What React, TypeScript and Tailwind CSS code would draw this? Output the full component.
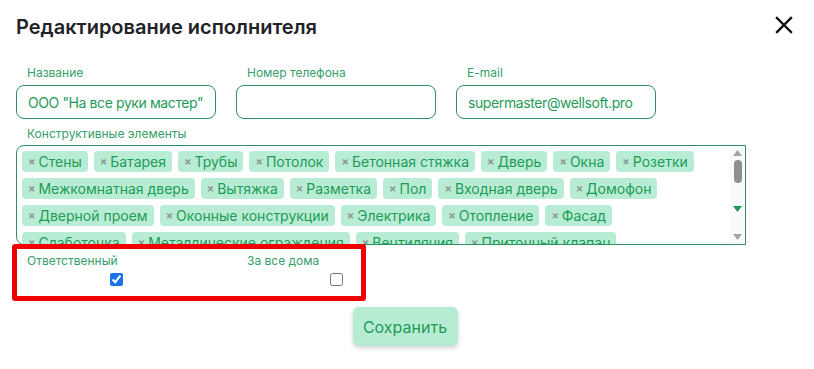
import { useState } from "react";

const TAGS = [
  "Стены",
  "Батарея",
  "Трубы",
  "Потолок",
  "Бетонная стяжка",
  "Дверь",
  "Окна",
  "Розетки",
  "Межкомнатная дверь",
  "Вытяжка",
  "Разметка",
  "Пол",
  "Входная дверь",
  "Домофон",
  "Дверной проем",
  "Оконные конструкции",
  "Электрика",
  "Отопление",
  "Фасад",
  "Слаботочка",
  "Металлические ограждения",
  "Вентиляция",
  "Приточный клапан",
];

function Field({ label, value }: { label: string; value: string }) {
  return (
    <div className="w-[200px]">
      <div className="pl-[11px] text-[12px] leading-[15px] text-[#35a06a]">
        {label}
      </div>
      <input
        readOnly
        value={value}
        className="mt-[5px] h-[34px] w-full rounded-[8px] border border-[#2e9160] px-[11px] text-[14px] tracking-[-0.4px] text-[#1f9a58] outline-none"
      />
    </div>
  );
}

export default function App() {
  const [responsible, setResponsible] = useState(true);
  const [allHouses, setAllHouses] = useState(false);

  return (
    <div className="relative h-[369px] w-[814px] bg-white px-4 pt-[14px] font-['Inter','Noto_Sans',sans-serif]">
      {/* Header */}
      <div className="flex items-center justify-between">
        <h2 className="text-[20px] font-semibold leading-[26px] text-[#1f2328]">
          Редактирование исполнителя
        </h2>
        <button className="mr-[4px] mt-[-4px]">
          <svg width="20" height="20" viewBox="0 0 20 20">
            <path
              d="M3 3L17 17M17 3L3 17"
              stroke="#111"
              strokeWidth="2.4"
              strokeLinecap="square"
            />
          </svg>
        </button>
      </div>

      {/* Inputs */}
      <div className="mt-[25px] flex gap-5">
        <Field label="Название" value={'ООО "На все руки мастер"'} />
        <Field label="Номер телефона" value="" />
        <Field label="E-mail" value="supermaster@wellsoft.pro" />
      </div>

      {/* Tags */}
      <div className="mt-[7px] pl-[11px] text-[12px] leading-[15px] text-[#35a06a]">
        Конструктивные элементы
      </div>
      <div className="mt-[4px] flex h-[100px] w-[730px] rounded-l-[8px] border border-[#2e9160]">
        <div className="flex-1 overflow-hidden pl-[5px] pr-[10px] pt-[5px]">
          <div className="flex flex-wrap gap-x-[6px] gap-y-[6px]">
            {TAGS.map((t) => (
              <span
                key={t}
                className="flex h-[21px] items-center gap-[3px] rounded-[4px] bg-[#b9ecd4] px-[6px] text-[14px] text-[#1c9c57]"
              >
                <span className="text-[11px] font-bold text-[#8a9a92]">×</span>
                {t}
              </span>
            ))}
          </div>
        </div>
        {/* scrollbar */}
        <div className="flex w-[15px] flex-col items-center bg-[#fafafa] py-[4px]">
          <svg width="9" height="6" viewBox="0 0 9 6">
            <path d="M4.5 0L9 6H0z" fill="#a3a3a3" />
          </svg>
          <div className="mt-[4px] h-[23px] w-[8px] rounded-full bg-[#8f8f8f]" />
          <svg className="mt-[23px]" width="9" height="6" viewBox="0 0 9 6">
            <path d="M0 0H9L4.5 6z" fill="#1f9a58" />
          </svg>
          <div className="flex-1" />
          <svg width="9" height="6" viewBox="0 0 9 6">
            <path d="M0 0H9L4.5 6z" fill="#a3a3a3" />
          </svg>
        </div>
      </div>

      {/* Checkboxes */}
      <div className="mt-[8px] flex gap-5">
        <label className="w-[200px]">
          <div className="pl-[11px] text-[12px] leading-[15px] text-[#35a06a]">
            Ответственный
          </div>
          <div className="mt-[5px] flex justify-center">
            <input
              type="checkbox"
              checked={responsible}
              onChange={(e) => setResponsible(e.target.checked)}
              className="h-[13px] w-[13px] accent-[#1a73e8]"
            />
          </div>
        </label>
        <label className="w-[200px]">
          <div className="pl-[11px] text-[12px] leading-[15px] text-[#35a06a]">
            За все дома
          </div>
          <div className="mt-[5px] flex justify-center">
            <input
              type="checkbox"
              checked={allHouses}
              onChange={(e) => setAllHouses(e.target.checked)}
              className="h-[13px] w-[13px]"
            />
          </div>
        </label>
      </div>

      {/* Red annotation */}
      <div className="pointer-events-none absolute left-[12px] top-[244px] h-[57px] w-[354px] rounded-[3px] border-[5px] border-[#f00000]" />

      {/* Save */}
      <div className="mt-[21px] flex justify-center">
        <button className="ml-[-4px] h-[39px] w-[105px] rounded-[6px] bg-[#b6ecd1] text-[16px] text-[#1f9a58] shadow-[0_2px_5px_rgba(0,0,0,0.18)]">
          Сохранить
        </button>
      </div>
    </div>
  );
}
